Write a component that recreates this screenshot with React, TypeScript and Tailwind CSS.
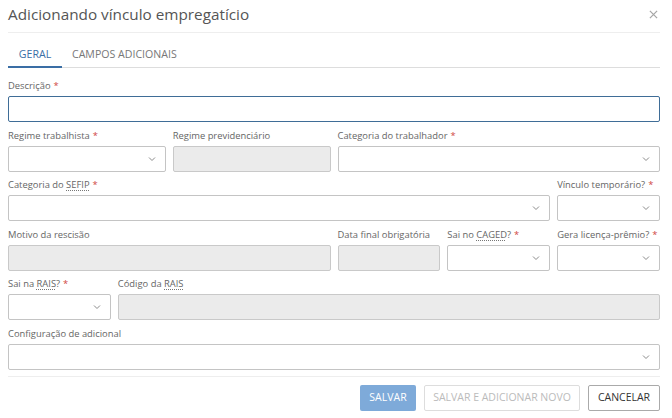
import React from 'react';

const Req = () => <span className="text-[#d0463f] ml-[3px]">*</span>;

const Abbr: React.FC<{ children: React.ReactNode }> = ({ children }) => (
  <span className="underline decoration-dotted decoration-[#777] underline-offset-2">{children}</span>
);

const Chevron = () => (
  <svg width="8" height="5" viewBox="0 0 8 5" className="absolute right-[9px] top-1/2 -translate-y-1/2">
    <path d="M1 1l3 3 3-3" fill="none" stroke="#8a8a8a" strokeWidth="1" />
  </svg>
);

type FieldProps = {
  label: React.ReactNode;
  span: string;
  kind: 'select' | 'disabled' | 'text' | 'focus';
};

const Field: React.FC<FieldProps> = ({ label, span, kind }) => {
  const box =
    kind === 'disabled'
      ? 'bg-[#ebebeb] border-[#c9c9c9]'
      : kind === 'focus'
      ? 'bg-white border-[#3f6d97]'
      : 'bg-white border-[#c4c4c4]';
  return (
    <div className={`${span} flex flex-col`}>
      <div className="text-[9.4px] leading-[14px] text-[#666] h-[14px] mb-[3px] whitespace-nowrap">{label}</div>
      <div className={`relative h-[26px] border rounded-[2px] ${box}`}>
        {kind === 'select' && <Chevron />}
      </div>
    </div>
  );
};

export default function App() {
  return (
    <div className="w-[672px] h-[418px] bg-white overflow-hidden" style={{ fontFamily: '"Open Sans", "Noto Sans", sans-serif' }}>
      <div className="pl-[8px] pr-[12px]">
        {/* Header */}
        <div className="flex items-start justify-between h-[33px] pt-[4px] border-b border-[#eeeeee]">
          <div className="text-[15.3px] text-[#555] leading-[20px]">Adicionando vínculo empregatício</div>
          <div className="h-[20px] flex items-center">
            <svg width="9" height="9" viewBox="0 0 10 10" className="mr-[2px]">
              <path d="M1 1l8 8M9 1l-8 8" stroke="#a6a6a6" strokeWidth="1.4" />
            </svg>
          </div>
        </div>

        {/* Tabs */}
        <div className="flex border-b border-[#dddddd] mt-[10px] h-[25px]">
          <div className="w-[54px] text-center text-[10.6px] leading-[22px] text-[#3a6ea5] border-b-2 border-[#3a6ea5] -mb-[1px]">GERAL</div>
          <div className="px-[10px] text-[10.6px] leading-[22px] text-[#777]">CAMPOS ADICIONAIS</div>
        </div>

        {/* Form */}
        <div className="grid grid-cols-12 gap-x-[7px] gap-y-[6.5px] mt-[11px]">
          <Field span="col-span-12" kind="focus" label={<>Descrição<Req /></>} />
          <Field span="col-span-3" kind="select" label={<>Regime trabalhista<Req /></>} />
          <Field span="col-span-3" kind="disabled" label="Regime previdenciário" />
          <Field span="col-span-6" kind="select" label={<>Categoria do trabalhador<Req /></>} />
          <Field span="col-span-10" kind="select" label={<>Categoria do <Abbr>SEFIP</Abbr><Req /></>} />
          <Field span="col-span-2" kind="select" label={<>Vínculo temporário?<Req /></>} />
          <Field span="col-span-6" kind="disabled" label="Motivo da rescisão" />
          <Field span="col-span-2" kind="disabled" label="Data final obrigatória" />
          <Field span="col-span-2" kind="select" label={<>Sai no <Abbr>CAGED</Abbr>?<Req /></>} />
          <Field span="col-span-2" kind="select" label={<>Gera licença-prêmio?<Req /></>} />
          <Field span="col-span-2" kind="select" label={<>Sai na <Abbr>RAIS</Abbr>?<Req /></>} />
          <Field span="col-span-10" kind="disabled" label={<>Código da <Abbr>RAIS</Abbr></>} />
          <Field span="col-span-12" kind="select" label="Configuração de adicional" />
        </div>

        {/* Footer */}
        <div className="mt-[6px] border-t border-[#eeeeee] pt-[8px] flex justify-end gap-[8px]">
          <button className="w-[56px] h-[26px] bg-[#7eaad9] text-white text-[10.5px] rounded-[2px]">SALVAR</button>
          <button className="w-[156px] h-[26px] bg-white border border-[#dddddd] text-[#bbbbbb] text-[10.5px] rounded-[2px] whitespace-nowrap">SALVAR E ADICIONAR NOVO</button>
          <button className="w-[72px] h-[26px] bg-white border border-[#aaaaaa] text-[#333] text-[10.5px] rounded-[2px]">CANCELAR</button>
        </div>
      </div>
    </div>
  );
}
